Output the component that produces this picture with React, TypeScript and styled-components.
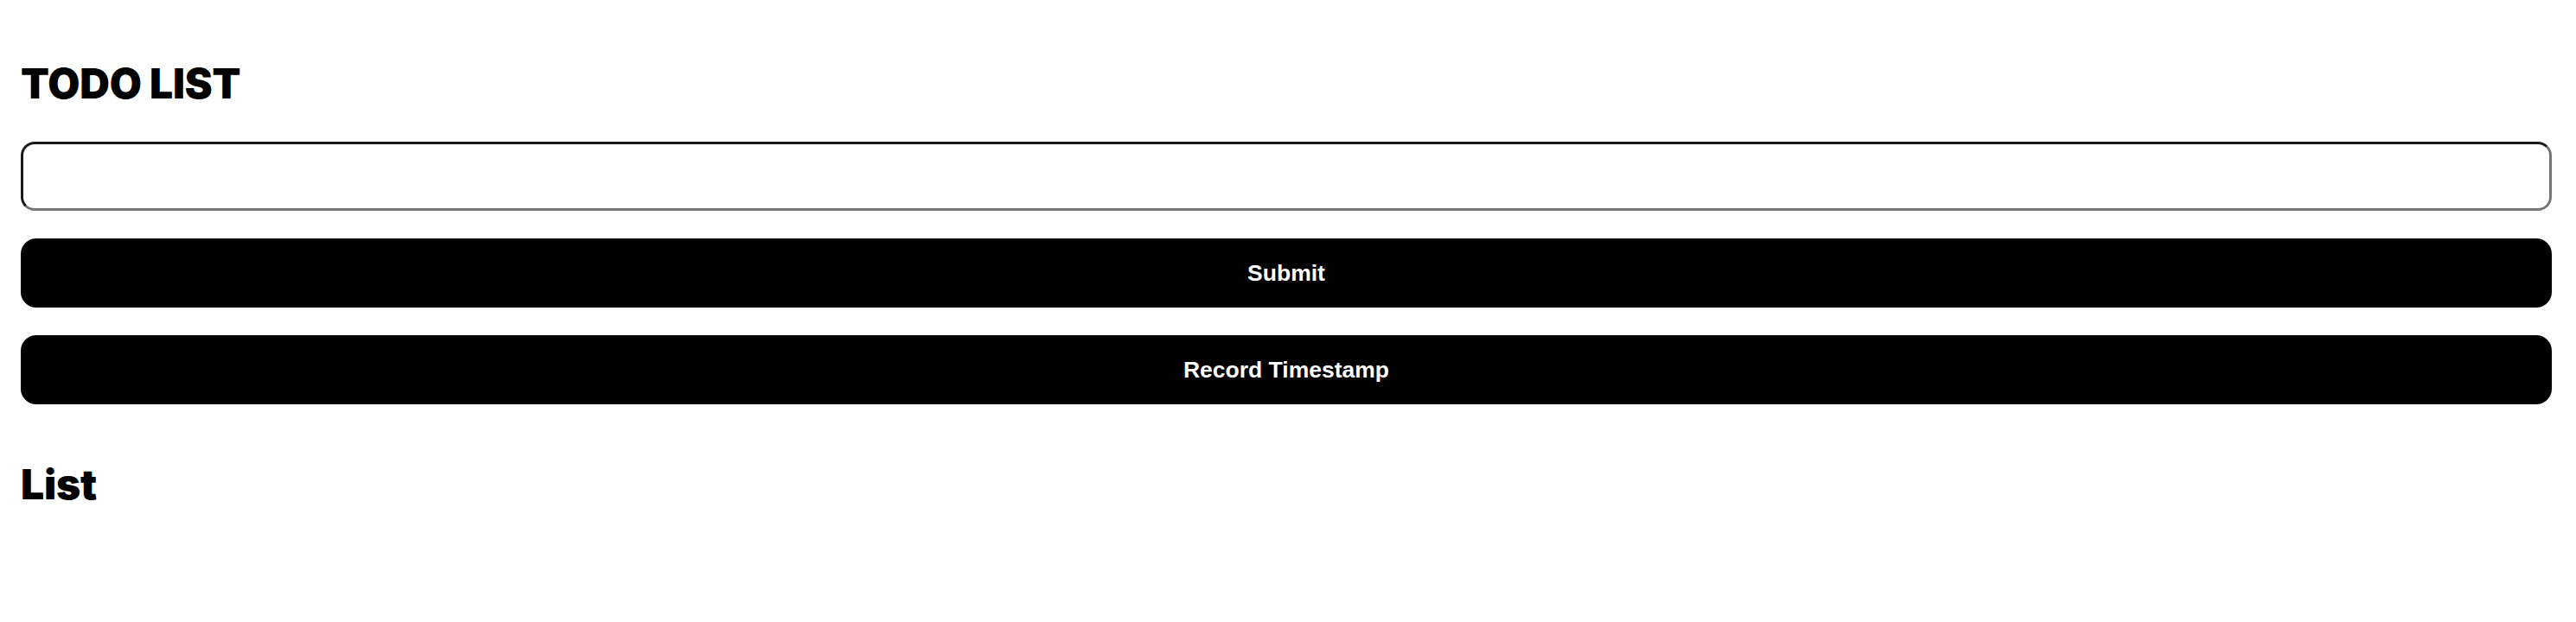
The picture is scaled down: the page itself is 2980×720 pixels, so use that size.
import React, { useState } from 'react';
import styled, { createGlobalStyle } from 'styled-components';

const GlobalStyle = createGlobalStyle`
  body {
    margin: 0;
    background: #fff;
    font-family: "Liberation Sans", Arial, sans-serif;
  }
`;

const Page = styled.main`
  display: flex;
  flex-direction: column;
  padding: 67px 28px 40px 24px;
`;

const Heading = styled.h1`
  margin: 0;
  font-family: Inter, "Noto Sans", sans-serif;
  font-weight: 900;
  font-size: 48px;
  letter-spacing: -0.004em;
  color: #000;
`;

const Form = styled.form`
  display: flex;
  flex-direction: column;
  gap: 32px;
  margin-top: 38px;
  margin-bottom: 63px;
`;

const TextInput = styled.input`
  box-sizing: border-box;
  height: 80px;
  width: 100%;
  padding: 0 20px;
  border: 3.5px solid;
  border-color: #1a1a1a #767676 #767676 #1a1a1a;
  border-radius: 16px;
  font-size: 26px;
  font-family: "Liberation Sans", Arial, sans-serif;
  outline: none;
`;

const Button = styled.button`
  box-sizing: border-box;
  height: 80px;
  width: 100%;
  border: none;
  border-radius: 18px;
  background: #000;
  color: #fff;
  font-family: "Liberation Sans", Arial, sans-serif;
  font-weight: 700;
  font-size: 26.5px;
  cursor: pointer;
`;

export default function App() {
  const [text, setText] = useState('');
  const [items, setItems] = useState<string[]>([]);

  const submit = (e: React.FormEvent) => {
    e.preventDefault();
    if (!text.trim()) return;
    setItems([...items, text]);
    setText('');
  };

  return (
    <>
      <GlobalStyle />
      <Page>
        <Heading>TODO LIST</Heading>
        <Form onSubmit={submit}>
          <TextInput value={text} onChange={(e) => setText(e.target.value)} />
          <Button type="submit">Submit</Button>
          <Button type="button" onClick={() => setItems([...items, new Date().toISOString()])}>
            Record Timestamp
          </Button>
        </Form>
        <Heading>List</Heading>
        <ul>
          {items.map((item, i) => (
            <li key={i}>{item}</li>
          ))}
        </ul>
      </Page>
    </>
  );
}
